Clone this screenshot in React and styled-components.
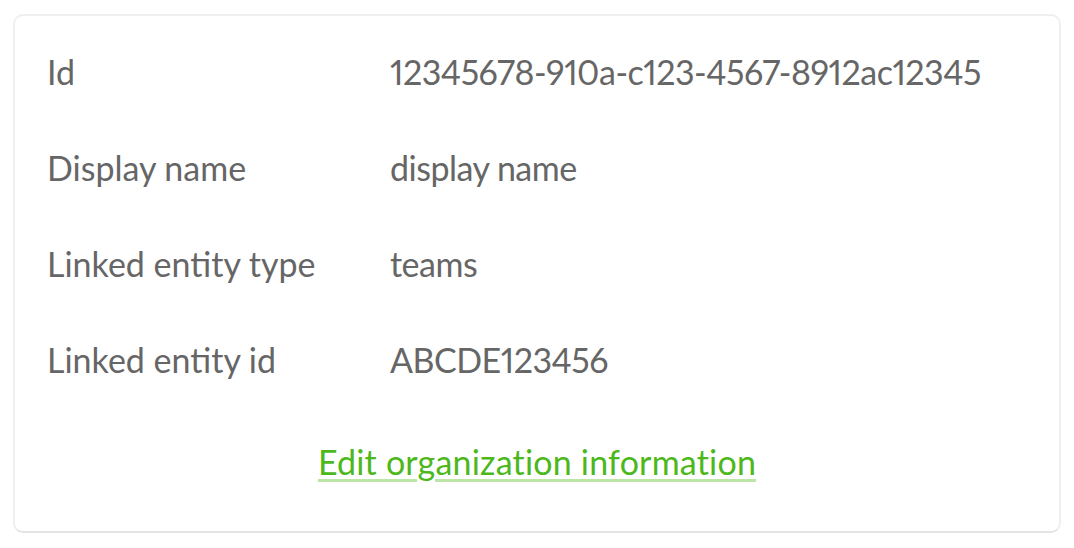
import React from "react";
import styled, { createGlobalStyle } from "styled-components";

const GlobalStyle = createGlobalStyle`
  html, body {
    margin: 0;
    padding: 0;
    background: #fff;
  }
  body {
    font-family: Lato, "Open Sans", sans-serif;
  }
`;

const Page = styled.div`
  padding: 14px 13px 15px 13px;
`;

const Card = styled.div`
  box-sizing: border-box;
  height: 519px;
  border: 2px solid #efefef;
  border-bottom-color: #e4e4e4;
  border-radius: 10px;
  background: #fff;
  padding: 8px 32px 0;
  display: flex;
  flex-direction: column;
`;

const InfoList = styled.dl`
  margin: 0;
  display: grid;
  grid-template-columns: 343px 1fr;
  grid-auto-rows: 96px;
  align-items: center;
`;

const Term = styled.dt`
  font-size: 34px;
  color: #666;
  line-height: 96px;
`;

const Value = styled.dd`
  margin: 0;
  font-size: 34px;
  color: #666;
  line-height: 96px;
  font-variant-numeric: proportional-nums;
  letter-spacing: -0.5px;
`;

const Footer = styled.div`
  display: flex;
  justify-content: center;
  padding-top: 6px;
  line-height: 96px;
`;

const EditLink = styled.a`
  font-size: 34px;
  color: #4cb81c;
  letter-spacing: 0.2px;
  text-decoration: underline;
  text-decoration-color: #bde6a6;
  text-decoration-thickness: 3px;
  text-underline-offset: 4px;
  cursor: pointer;
`;

const rows = [
  ["Id", "12345678-910a-c123-4567-8912ac12345"],
  ["Display name", "display name"],
  ["Linked entity type", "teams"],
  ["Linked entity id", "ABCDE123456"],
];

export default function App() {
  return (
    <>
      <GlobalStyle />
      <Page>
        <Card>
          <InfoList>
            {rows.map(([k, v]) => (
              <React.Fragment key={k}>
                <Term>{k}</Term>
                <Value>{v}</Value>
              </React.Fragment>
            ))}
          </InfoList>
          <Footer>
            <EditLink>Edit organization information</EditLink>
          </Footer>
        </Card>
      </Page>
    </>
  );
}
